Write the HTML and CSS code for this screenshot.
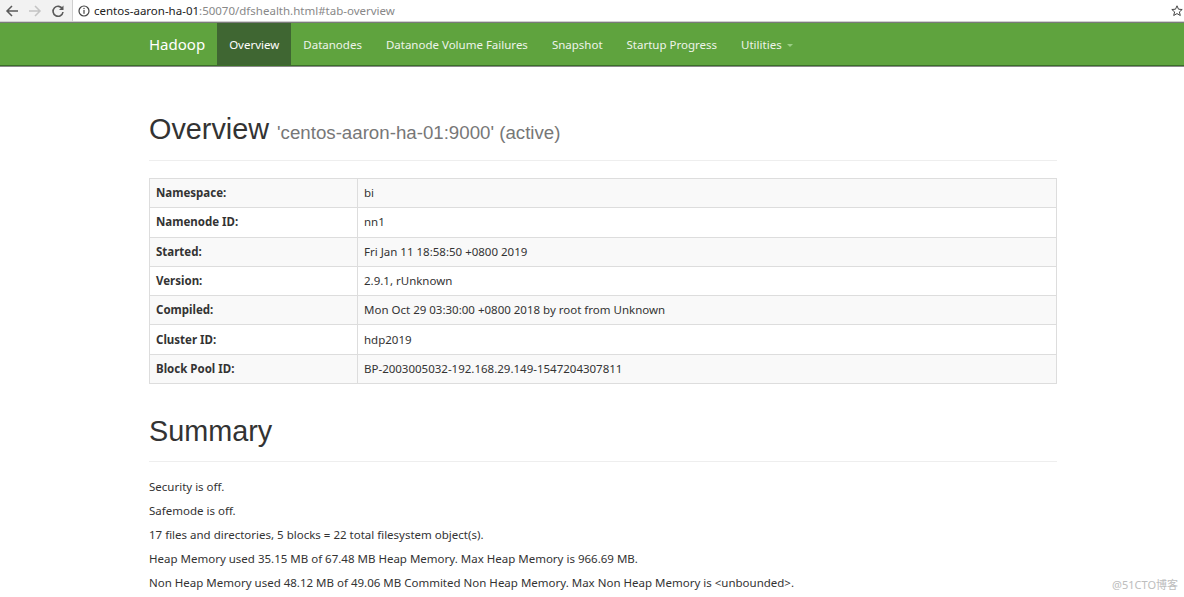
FILE: index.html
```html
<!DOCTYPE html>
<html>
<head>
<meta charset="utf-8">
<title>Namenode information</title>
<link rel="stylesheet" href="styles.css">
</head>
<body>
<div class="chrome">
  <div class="chrome-btns">
    <svg class="cbtn" width="14" height="14" viewBox="0 0 14 14"><path d="M13 7H2M7 2L2 7l5 5" fill="none" stroke="#5a5a5a" stroke-width="1.5"/></svg>
    <svg class="cbtn" width="14" height="14" viewBox="0 0 14 14"><path d="M1 7h11M7 2l5 5-5 5" fill="none" stroke="#c4c4c4" stroke-width="1.5"/></svg>
    <svg class="cbtn" width="14" height="14" viewBox="0 0 14 14"><path d="M11.5 5A5 5 0 1 0 12 8" fill="none" stroke="#5a5a5a" stroke-width="1.6"/><path d="M12.5 1.5v4.5H8z" fill="#5a5a5a"/></svg>
  </div>
  <div class="omnibox">
    <svg class="info" width="12" height="12" viewBox="0 0 12 12"><circle cx="6" cy="6" r="5" fill="none" stroke="#444" stroke-width="1.2"/><rect x="5.4" y="5" width="1.2" height="3.8" fill="#444"/><rect x="5.4" y="2.9" width="1.2" height="1.2" fill="#444"/></svg>
    <span class="host">centos-aaron-ha-01</span><span class="path">:50070/dfshealth.html#tab-overview</span>
    <svg class="star" width="12" height="12" viewBox="0 0 12 12"><path d="M6 0.8l1.5 3.4 3.7 0.3-2.8 2.4 0.9 3.6L6 8.6 2.7 10.5l0.9-3.6L0.8 4.5l3.7-0.3z" fill="none" stroke="#444" stroke-width="1"/></svg>
  </div>
</div>

<header class="navbar">
  <div class="nav-inner">
    <a class="brand">Hadoop</a>
    <ul class="nav">
      <li class="active"><a>Overview</a></li>
      <li><a>Datanodes</a></li>
      <li><a>Datanode Volume Failures</a></li>
      <li><a>Snapshot</a></li>
      <li><a>Startup Progress</a></li>
      <li><a>Utilities <span class="caret"></span></a></li>
    </ul>
  </div>
</header>

<main class="container">
  <div class="page-header">
    <h1>Overview <small>'centos-aaron-ha-01:9000' (active)</small></h1>
  </div>
  <table class="info-table">
    <tr><th>Namespace:</th><td>bi</td></tr>
    <tr><th>Namenode ID:</th><td>nn1</td></tr>
    <tr><th>Started:</th><td>Fri Jan 11 18:58:50 +0800 2019</td></tr>
    <tr><th>Version:</th><td>2.9.1, rUnknown</td></tr>
    <tr><th>Compiled:</th><td>Mon Oct 29 03:30:00 +0800 2018 by root from Unknown</td></tr>
    <tr><th>Cluster ID:</th><td>hdp2019</td></tr>
    <tr><th>Block Pool ID:</th><td>BP-2003005032-192.168.29.149-1547204307811</td></tr>
  </table>

  <div class="page-header summary-header">
    <h1>Summary</h1>
  </div>
  <p>Security is off.</p>
  <p>Safemode is off.</p>
  <p>17 files and directories, 5 blocks = 22 total filesystem object(s).</p>
  <p>Heap Memory used 35.15 MB of 67.48 MB Heap Memory. Max Heap Memory is 966.69 MB.</p>
  <p>Non Heap Memory used 48.12 MB of 49.06 MB Commited Non Heap Memory. Max Non Heap Memory is &lt;unbounded&gt;.</p>
</main>

<div class="watermark">@51CTO博客</div>
</body>
</html>
```

FILE: styles.css
```css
* { box-sizing: border-box; }
html, body { margin: 0; padding: 0; }
body {
  width: 1184px;
  height: 597px;
  overflow: hidden;
  background: #fff;
  color: #333;
  font-family: "Noto Sans", "Noto Sans CJK SC", sans-serif;
  font-size: 11.5px;
  position: relative;
}

/* browser chrome */
.chrome {
  height: 23px;
  display: flex;
  align-items: stretch;
  background: #f2f2f2;
  border-bottom: 1px solid #7a7a7a;
  box-shadow: 0 -1px 0 #d0d0d0 inset;
}
.chrome-btns {
  width: 72px;
  display: flex;
  align-items: center;
  gap: 9px;
  padding-left: 5px;
}
.cbtn { display: block; }
.omnibox {
  flex: 1;
  display: flex;
  align-items: center;
  background: #fff;
  border-left: 1px solid #cfcfcf;
  padding-left: 5px;
  font-family: "Noto Sans", sans-serif;
  font-size: 11.5px;
  height: 21px;
}
.info { margin-right: 4px; }
.host { color: #222; }
.path { color: #888; }
.star { margin-left: auto; margin-right: 1px; }

/* navbar */
.navbar {
  height: 43px;
  background: #5fa33e;
  border-bottom: 1px solid #3a6f27;
  box-shadow: 0 1px 0 #8a8a8a;
}
.nav-inner {
  padding-left: 137px;
  display: flex;
  height: 42px;
}
.brand {
  display: flex;
  align-items: center;
  padding: 0 12px;
  color: #fff;
  font-size: 15px;
}
.nav {
  display: flex;
  list-style: none;
  margin: 0;
  padding: 0;
}
.nav li a {
  display: flex;
  align-items: center;
  height: 42px;
  padding: 0 12px;
  color: #eef4ea;
  font-size: 11.5px;
}
.nav li.active a {
  background: #3f6632;
  color: #fff;
}
.caret {
  display: inline-block;
  width: 0; height: 0;
  margin-left: 5px;
  margin-top: 2px;
  border-top: 3px solid #9ccf86;
  border-left: 3px solid transparent;
  border-right: 3px solid transparent;
}

/* content */
.container {
  padding-left: 149px;
  width: 1057px;
  box-sizing: border-box;
}
.page-header {
  margin-top: 47px;
  padding-bottom: 11px;
  border-bottom: 1px solid #eee;
  margin-bottom: 17px;
}
h1 {
  margin: 0;
  font-family: "Liberation Sans", Arial, sans-serif;
  font-weight: normal;
  font-size: 28.8px;
  line-height: 32px;
  color: #333;
}
h1 small {
  font-size: 18.7px;
  color: #777;
}
.info-table {
  width: 100%;
  border-collapse: collapse;
  border: 1px solid #ddd;
}
.info-table th, .info-table td {
  border: 1px solid #ddd;
  padding: 0 6px;
  height: 29.3px;
  text-align: left;
  vertical-align: middle;
  line-height: 16px;
}
.info-table th { width: 208px; font-weight: bold; }
.info-table tr:nth-child(odd) { background: #f9f9f9; }

.summary-header { margin-top: 31px; padding-bottom: 14px; margin-bottom: 17px; }
p {
  margin: 0 0 8px;
  line-height: 16px;
}

.watermark {
  position: absolute;
  right: 6px;
  bottom: 5px;
  color: #bdbdbd;
  font-size: 11px;
}
```
